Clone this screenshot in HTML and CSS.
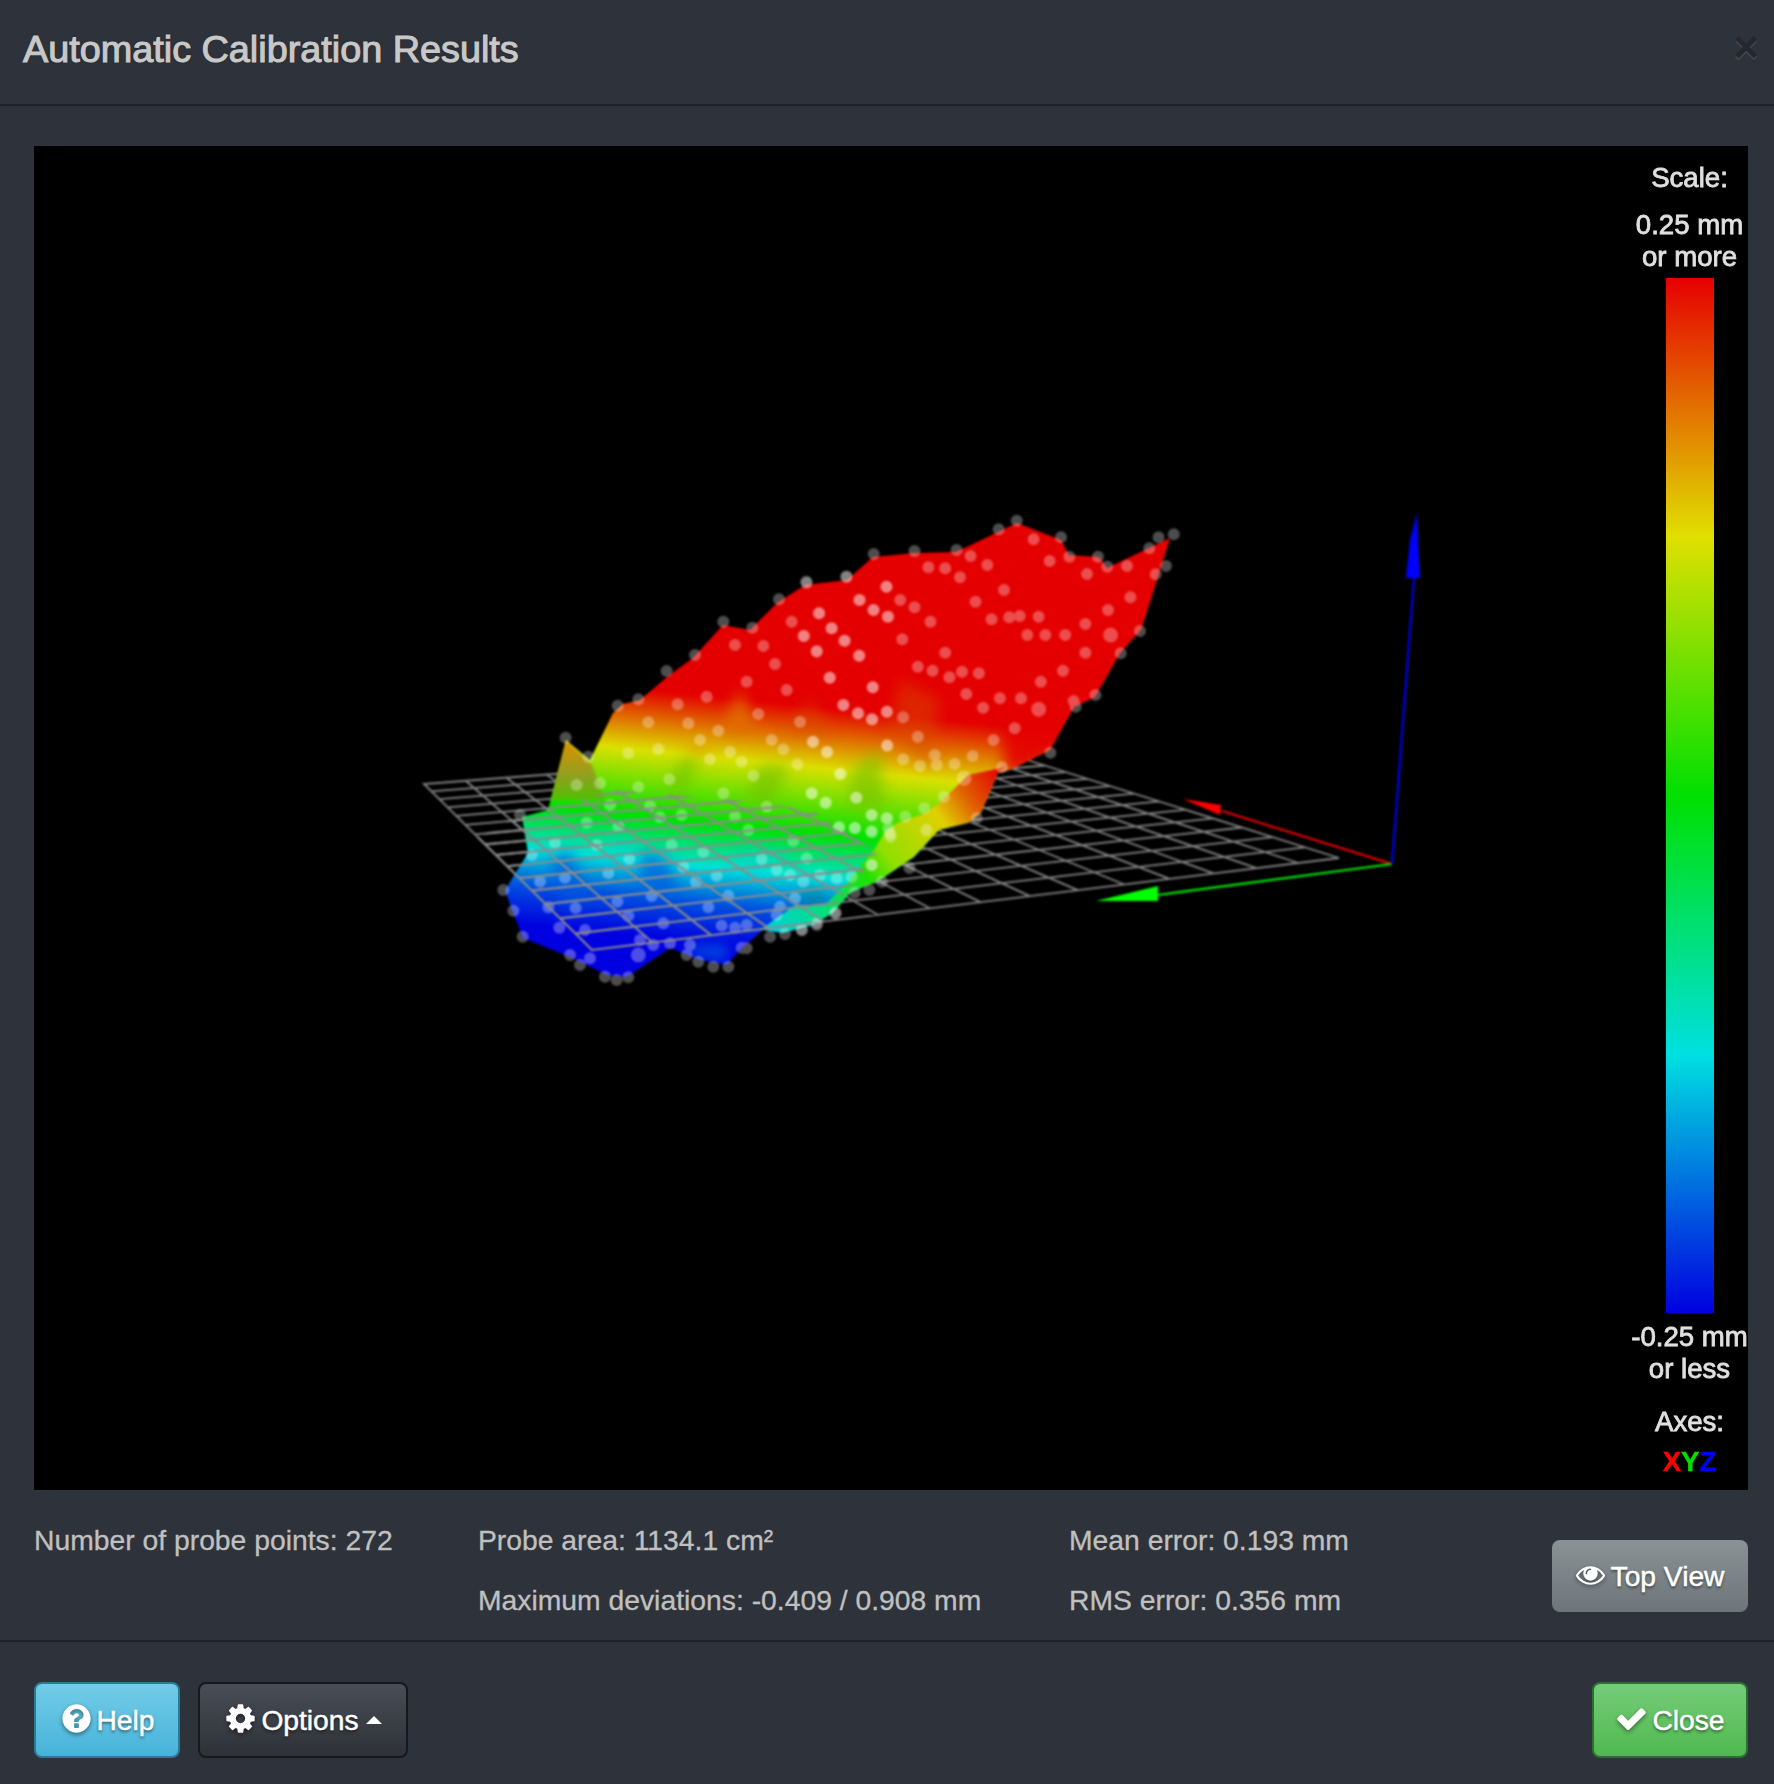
FILE: index.html
```html
<!DOCTYPE html>
<html lang="en">
<head>
<meta charset="utf-8">
<title>Automatic Calibration Results</title>
<link rel="stylesheet" href="styles.css">
</head>
<body>
<header class="head">
  <h3 class="title">Automatic Calibration Results</h3>
  <span class="dismiss">×</span>
</header>
<main class="body">
  <div class="plot">
    <svg class="scene" viewBox="34 146 1714 1344" xmlns="http://www.w3.org/2000/svg">
      <defs>
        <linearGradient id="mainGrad" gradientUnits="userSpaceOnUse" x1="650" y1="690" x2="625" y2="935">
          <stop offset="0" stop-color="#e40000"/>
          <stop offset=".245" stop-color="#dce000"/>
          <stop offset=".51" stop-color="#00e000"/>
          <stop offset=".69" stop-color="#00e0d8"/>
          <stop offset=".84" stop-color="#0050e0"/>
          <stop offset="1" stop-color="#0000e0"/>
        </linearGradient>
        <linearGradient id="foldGrad" gradientUnits="userSpaceOnUse" x1="1000" y1="770" x2="770" y2="935">
          <stop offset="0" stop-color="#e40000"/>
          <stop offset=".15" stop-color="#e06000"/>
          <stop offset=".27" stop-color="#e0d000"/>
          <stop offset=".5" stop-color="#90e000"/>
          <stop offset=".6" stop-color="#20e000"/>
          <stop offset=".8" stop-color="#00e080"/>
          <stop offset="1" stop-color="#00d0e0"/>
        </linearGradient>
        <linearGradient id="spikeGrad" gradientUnits="userSpaceOnUse" x1="566" y1="740" x2="566" y2="800">
          <stop offset="0" stop-color="#e09000"/>
          <stop offset=".6" stop-color="#90a020"/>
          <stop offset="1" stop-color="#50c000"/>
        </linearGradient>
        <filter id="soft" x="-30%" y="-30%" width="160%" height="160%"><feGaussianBlur stdDeviation="7"/></filter>
        <clipPath id="surfaceClip">
          <path d="M566 740L590 760L613 713L623 704L640 700L667 677L693 658L723 625L750 630L777 603L805 585L847 580L873 557L914 553L956 552L1017 523L1061 540L1069 555L1099 557L1107 568L1170 538L1158 577L1141 630L1120 653L1095 697L1074 707L1050 750L1010 770L998 773L981 813L968 823L939 830L914 857L880 880L850 893L833 913L813 925L783 933L763 930L740 950L727 965L700 960L670 948L627 977L607 975L570 957L523 938L512 910L505 890L528 853L522 817L548 810Z"/>
        </clipPath>
        <clipPath id="frontClip">
          <path d="M400 880L520 815L617 790L733 800L813 810L877 853L827 917L700 975L560 975Z"/>
        </clipPath>
        <path id="gridLines" d="M970 742L1339 858L592 950L424 784ZM987.6 747.5L431.5 791.4M1005.9 753.3L439.4 799.2M1025 759.3L447.6 807.3M1044.9 765.5L456.3 815.9M1065.7 772.1L465.4 824.9M1087.5 778.9L475 834.4M1110.2 786.1L485.1 844.4M1134.1 793.6L495.8 855M1159.1 801.4L507.2 866.2M1185.3 809.7L519.2 878.1M1212.9 818.4L531.9 890.6M1242 827.5L545.5 904.1M1272.6 837.1L560 918.4M1304.8 847.3L575.4 933.6M938.2 744.4L1298.3 863M905.9 746.9L1256.5 868.2M872.9 749.5L1213.6 873.4M839.4 752L1169.6 878.9M805.2 754.7L1124.2 884.5M770.3 757.4L1077.7 890.2M734.8 760.1L1029.8 896.1M698.6 762.9L980.6 902.1M661.7 765.7L930 908.4M624 768.6L877.7 914.8M585.6 771.6L824.2 921.4M546.5 774.6L768.7 928.2M506.4 777.7L711.6 935.3M465.7 780.8L652.7 942.5"/>
      </defs>

      <use href="#gridLines" class="grid"/>

      <path class="surface" d="M566 740L590 760L613 713L623 704L640 700L667 677L693 658L723 625L750 630L777 603L805 585L847 580L873 557L914 553L956 552L1017 523L1061 540L1069 555L1099 557L1107 568L1170 538L1158 577L1141 630L1120 653L1095 697L1074 707L1050 750L1010 770L998 773L981 813L968 823L939 830L914 857L880 880L850 893L833 913L813 925L783 933L763 930L740 950L727 965L700 960L670 948L627 977L607 975L570 957L523 938L512 910L505 890L528 853L522 817L548 810Z"/>

      <g clip-path="url(#surfaceClip)">
        <g filter="url(#soft)">
          <path class="w-red" d="M1000 650L1150 560L1100 720L1030 770L1005 775Z"/>
          <path class="w-orange" d="M740 690L756 730L720 733Z"/>
          <path class="w-orange2" d="M810 700L833 733L783 733Z"/>
          <path class="w-orange2" d="M900 680L940 700L930 770L890 730Z"/>
          <path class="w-amber" d="M683 750L700 735L717 757Z"/>
          <path class="w-lime" d="M680 760L700 755L685 795L665 790Z"/>
          <path class="w-lime" d="M760 765L790 765L770 810L745 800Z"/>
          <path class="w-lime" d="M850 770L880 750L885 810L850 810Z"/>
          <path class="w-blue" d="M550 860L570 850L590 900L565 905Z"/>
          <path class="w-blue" d="M640 850L670 860L680 900L640 890Z"/>
          <path class="w-cyan" d="M600 835L640 840L625 860Z"/>
          <path class="w-cyan" d="M730 850L790 850L760 880Z"/>
          <path class="w-teal" d="M800 892L830 893L812 910Z"/>
          <path class="w-lightblue" d="M690 945L730 945L725 960L690 955Z"/>
        </g>
        <path class="spike" d="M566 740L592 765L605 800L545 800Z"/>
        <path class="fold" d="M1006 767L968 775L943 800L926 813L897 823L884 833L876 847L850 880L825 905L795 905L760 930L783 933L813 925L833 913L850 893L880 880L914 857L939 830L968 823L981 813L998 773Z"/>
      </g>

      <path class="probe" d="M1016.8 520.7h0M998.7 529.3h0M1061 537.3h0M1173.8 534.3h0M1158.6 537.3h0M1098 556.7h0M1107.3 566.7h0M1166 566h0M873.7 554h0M914.5 551h0M956.6 550h0M846.3 576.7h0M806.3 581.7h0M1140 631h0M1120.7 653.3h0M1095.5 695h0M1075.7 706.7h0M1050.4 752.7h0M1033.6 539.3h0M1149.3 548.3h0M1069.4 556.7h0M1049.6 561h0M1127 566h0M1087 574h0M1155.7 574.3h0M970.5 556h0M987.3 565h0M928.4 567.3h0M945.2 568.3h0M960 577.3h0M886.3 586.7h0M1004 590h0M1130.4 597.3h0M859 600h0M900.2 600h0M975.5 601.7h0M1108 610h0M914.5 607.3h0M873.7 610h0M819 613.3h0M887.5 616.7h0M991.5 619.3h0M1009.2 617.3h0M1019.7 616h0M1038.6 616.7h0M930.5 621.7h0M1085.4 624h0M831.6 628.3h0M1027.3 635h0M1045.4 635h0M1065.2 635h0M804.2 636h0M844.2 640.7h0M902.3 639.3h0M816.8 651h0M945.2 652.7h0M1085.4 652.7h0M859 655.7h0M917.8 666.7h0M932.6 670.7h0M949.4 677.3h0M962 671.7h0M978.9 673.3h0M1063 670.7h0M829.5 677.7h0M1040.8 681.7h0M872.8 687.3h0M966.3 694h0M999.9 698.3h0M1021 698.3h0M1073.6 701h0M983.1 707.7h0M843.4 705h0M887.1 711.7h0M857.7 713.3h0M872.4 719.3h0M903.1 717.3h0M1014.7 728.3h0M917.8 736.7h0M993.6 740h0M812.6 741.7h0M887.1 745h0M827.4 751.7h0M934.7 755h0M903.1 759.3h0M920 766h0M936.8 765h0M954.5 764h0M972.6 756h0M1002 767.3h0M840.8 774h0M811.8 793.3h0M825.3 802.7h0M856 797.7h0M944 796.7h0M924.2 808.3h0M871.6 815h0M886.3 818.3h0M905.2 816.7h0M838.7 828.3h0M854.7 827.7h0M871.6 831h0M888.4 828.3h0M926.3 830h0M890.5 836.7h0M871.6 865h0M882 881.7h0M869.4 890h0M854.7 892.7h0M835.8 913h0M816.8 925h0M802 930h0M909.4 868h0M976.8 818h0"/>
      <path class="probe probe-big" d="M1110.6 635h0M1038.7 709.3h0M964.2 778.3h0M638.3 955h0"/>
      <g transform="translate(400 500) scale(.33333)">
        <path class="probe3" d="M1220 248h0M1340 230h0M1137 298h0M970 365h0M1057 383h0M885 465h0M800 513h0M653 617h0M715 598h0M497 713h0M565 770h0M360 945h0M310 1170h0M340 1232h0M368 1310h0M510 1365h0M540 1395h0M650 1440h0M615 1430h0M685 1432h0M860 1365h0M895 1385h0M940 1400h0M985 1400h0M1040 1345h0M1110 1310h0M1155 1302h0M1205 1290h0M1250 1270h0M1305 1240h0M1460 260h0M1380 300h0M1420 330h0M1465 350h0M1257 340h0M1175 365h0M1295 385h0M1210 408h0M1335 422h0M1005 435h0M1090 438h0M1250 455h0M1378 467h0M1125 492h0M1290 533h0M1040 545h0M1160 570h0M1418 562h0M920 590h0M833 613h0M1330 615h0M1375 640h0M1460 635h0M1415 658h0M1075 642h0M1200 665h0M745 667h0M865 670h0M955 692h0M900 720h0M1115 720h0M1240 725h0M1150 748h0M1462 738h0M685 760h0M775 747h0M990 755h0M1280 757h0M930 778h0M1025 785h0M1192 793h0M1320 822h0M1060 827h0M530 855h0M600 850h0M715 862h0M808 838h0M970 880h0M1235 880h0M1278 908h0M1370 893h0M1100 920h0M1415 945h0M630 915h0M750 918h0M1462 955h0M560 968h0M780 952h0M845 945h0M1005 950h0M655 980h0M1318 980h0M1365 985h0M1415 997h0M1470 1000h0M1045 990h0M465 1028h0M590 1035h0M815 1035h0M1180 1022h0M910 1055h0M1085 1077h0M1220 1075h0M395 1065h0M688 1077h0M850 1100h0M1130 1110h0M1170 1125h0M1415 1095h0M1260 1125h0M1310 1135h0M1355 1130h0M1210 1145h0M420 1145h0M495 1133h0M625 1120h0M950 1128h0M888 1147h0M755 1188h0M985 1187h0M652 1205h0M1185 1195h0M445 1222h0M527 1225h0M925 1222h0M1140 1220h0M685 1247h0M1130 1245h0M790 1270h0M478 1283h0M555 1290h0M965 1277h0M1005 1283h0M1040 1275h0M720 1320h0M1025 1343h0M760 1335h0M810 1330h0M870 1335h0M570 1375h0"/>
      </g>

      <use href="#gridLines" class="grid grid-front" clip-path="url(#frontClip)"/>

      <path class="axis-x" d="M1392 864L1222 811"/>
      <path class="axis-y" d="M1392 864L1158 895"/>
      <path class="axis-z" d="M1392 864L1414 578"/>
      <path class="cone-x" d="M1183 799L1221 805L1220 815Z"/>
      <path class="cone-y" d="M1096 901L1158 886L1158 901Z"/>
      <path class="cone-z" d="M1417 513L1418 540L1420 578L1406 578L1410 540Z"/>
    </svg>
    <aside class="legend">
      <div class="legend-title">Scale:</div>
      <div class="legend-top">0.25 mm<br>or more</div>
      <div class="legend-bar"></div>
      <div class="legend-bottom">-0.25 mm<br>or less</div>
      <div class="legend-axes">Axes:</div>
      <div class="legend-xyz"><span class="x">X</span><span class="y">Y</span><span class="z">Z</span></div>
    </aside>
  </div>
  <section class="stats">
    <div class="stat">Number of probe points: 272</div>
    <div class="stat">Probe area: 1134.1 cm²</div>
    <div class="stat">Mean error: 0.193 mm</div>
    <button class="btn btn-view">
      <svg class="icon icon-eye" viewBox="0 0 1792 1792"><path d="M1664 960q-152-236-381-353 61 104 61 225 0 185-131.5 316.5t-316.5 131.5-316.5-131.5-131.5-316.5q0-121 61-225-229 117-381 353 133 205 333.5 326.5t434.5 121.5 434.5-121.5 333.5-326.5zm-720-384q0-20-14-34t-34-14q-125 0-214.5 89.5t-89.5 214.5q0 20 14 34t34 14 34-14 14-34q0-86 61-147t147-61q20 0 34-14t14-34zm848 384q0 34-20 69-140 230-376.5 368.5t-499.5 138.5-499.5-139-376.5-368q-20-35-20-69t20-69q140-229 376.5-368t499.5-139 499.5 139 376.5 368q20 35 20 69z"/></svg>
      <span>Top View</span>
    </button>
    <div class="stat stat-second">Maximum deviations: -0.409 / 0.908 mm</div>
    <div class="stat">RMS error: 0.356 mm</div>
  </section>
</main>
<footer class="foot">
  <button class="btn btn-help">
    <svg class="icon" viewBox="0 0 1792 1792"><path d="M1024 1376v-192q0-14-9-23t-23-9h-192q-14 0-23 9t-9 23v192q0 14 9 23t23 9h192q14 0 23-9t9-23zm256-672q0-88-55.5-163t-138.5-116-170-41q-243 0-371 213-15 24 8 42l132 100q7 6 19 6 16 0 25-12 53-68 86-92 34-24 86-24 48 0 85.5 26t37.5 59q0 38-20 61t-68 45q-63 28-115.5 86.5t-52.5 125.5v36q0 14 9 23t23 9h192q14 0 23-9t9-23q0-19 21.5-49.5t54.5-49.5q32-18 49-28.5t46-35 44.5-48 28-60.5 12.5-81zm384 192q0 209-103 385.5t-279.5 279.5-385.5 103-385.5-103-279.5-279.5-103-385.5 103-385.5 279.5-279.5 385.5-103 385.5 103 279.5 279.5 103 385.5z"/></svg>
    <span>Help</span>
  </button>
  <button class="btn btn-options">
    <svg class="icon" viewBox="0 0 1792 1792"><path d="M1152 896q0-106-75-181t-181-75-181 75-75 181 75 181 181 75 181-75 75-181zm512-109v222q0 12-8 23t-20 13l-185 28q-19 54-39 91 35 50 107 138 10 12 10 25t-9 23q-27 37-99 108t-94 71q-12 0-26-9l-138-108q-44 23-91 38-16 136-29 186-7 28-36 28h-222q-14 0-24.5-8.5t-11.5-21.5l-28-184q-49-16-90-37l-141 107q-10 9-25 9-14 0-25-11-126-114-165-168-7-10-7-23 0-12 8-23 15-21 51-66.5t54-70.5q-27-50-41-99l-183-27q-13-2-21-12.5t-8-23.5v-222q0-12 8-23t19-13l186-28q14-46 39-92-40-57-107-138-10-12-10-24 0-10 9-23 26-36 98.5-107.5t94.5-71.5q13 0 26 10l138 107q44-23 91-38 16-136 29-186 7-28 36-28h222q14 0 24.5 8.5t11.5 21.5l28 184q49 16 90 37l142-107q9-9 24-9 13 0 25 10 129 119 165 170 7 8 7 22 0 12-8 23-15 21-51 66.5t-54 70.5q26 50 41 98l183 28q13 2 21 12.5t8 23.5z"/></svg>
    <span>Options</span>
    <i class="caret"></i>
  </button>
  <button class="btn btn-close">
    <svg class="icon" viewBox="0 0 1792 1792"><path d="M1671 566q0 40-28 68l-724 724-136 136q-28 28-68 28t-68-28l-136-136-362-362q-28-28-28-68t28-68l136-136q28-28 68-28t68 28l294 295 656-657q28-28 68-28t68 28l136 136q28 28 28 68z"/></svg>
    <span>Close</span>
  </button>
</footer>
</body>
</html>
```
FILE: styles.css
```css
* { box-sizing: border-box; }
html, body { margin: 0; padding: 0; }
body {
  width: 1774px;
  height: 1784px;
  background: #2e323a;
  color: #c0c0c0;
  font-family: "Liberation Sans", Arial, sans-serif;
  font-size: 28.3px;
  overflow: hidden;
  -webkit-text-stroke: .3px currentColor;
}
.head {
  height: 106px;
  border-bottom: 2px solid #1f2227;
  display: flex;
  align-items: center;
  justify-content: space-between;
  padding: 0 15px 10px 23px;
}
.title {
  margin: 0 0 -4px;
  font-size: 37.8px;
  font-weight: 400;
  color: #c8c8c8;
  -webkit-text-stroke: 1.1px #c8c8c8;
  text-shadow: 0 0 2px #15171a;
}
.dismiss {
  font-size: 44px;
  line-height: 1;
  font-weight: 700;
  color: #24272d;
  -webkit-text-stroke: 0;
  text-shadow: 0 2px 0 #43474e;
}
.body {
  height: 1536px;
  padding: 40px 26px 0 34px;
  border-bottom: 2px solid #1f2227;
}
.plot {
  position: relative;
  width: 1714px;
  height: 1344px;
  background: #000;
  overflow: hidden;
}
.scene {
  position: absolute;
  inset: 0;
  width: 100%;
  height: 100%;
  filter: blur(.8px);
}
.grid { fill: none; stroke: #858585; stroke-width: 1.8; }
.grid-front { stroke: #8c8c8c; stroke-width: 2.1; }
.surface { fill: url(#mainGrad); }
.fold { fill: url(#foldGrad); }
.spike { fill: url(#spikeGrad); filter: blur(1px); }
.w-red { fill: #e40000; opacity: .9; }
.w-orange { fill: #e07000; opacity: .85; }
.w-orange2 { fill: #d85000; opacity: .45; }
.w-amber { fill: #e0a000; opacity: .7; }
.w-lime { fill: #70c000; opacity: .6; }
.w-blue { fill: #0058e0; opacity: .7; }
.w-cyan { fill: #00d0e0; opacity: .5; }
.w-teal { fill: #007f90; opacity: .9; }
.w-lightblue { fill: #0068e0; opacity: .8; }
.probe, .probe3 {
  fill: none;
  stroke: rgba(255, 255, 255, .3);
  stroke-linecap: round;
}
.probe { stroke-width: 12; }
.probe-big { stroke-width: 15; }
.probe3 { stroke-width: 36; }
.axis-x, .axis-y, .axis-z { fill: none; stroke-width: 2.2; }
.axis-x { stroke: #f00000; }
.axis-y { stroke: #00f000; }
.axis-z { stroke: #0000f0; }
.cone-x { fill: #ff0000; }
.cone-y { fill: #00ff00; }
.cone-z { fill: #0000ff; }
.legend {
  position: absolute;
  top: 16px;
  right: 0;
  width: 117px;
  display: flex;
  flex-direction: column;
  align-items: center;
  color: #e0e0e0;
  font-size: 27.6px;
  line-height: 32px;
  text-align: center;
  white-space: nowrap;
  filter: blur(.6px);
  -webkit-text-stroke: .8px currentColor;
}
.legend-top { margin-top: 15px; }
.legend-bar {
  width: 48px;
  height: 1035px;
  margin-top: 5px;
  background: linear-gradient(#e60000, #e0e000 25%, #00e000 50%, #00e0e0 75%, #0000e0);
}
.legend-bottom { margin-top: 8px; }
.legend-axes { margin-top: 21px; }
.legend-xyz { margin-top: 8px; font-weight: 700; -webkit-text-stroke: .4px currentColor; }
.x { color: #ff0000; }
.y { color: #00e000; }
.z { color: #0000ff; }
.stats {
  display: grid;
  grid-template-columns: 444px 591px 1fr auto;
  grid-template-rows: 60px 60px;
  padding-top: 20px;
  line-height: 60px;
}
.stat-second { grid-column: 2; }
.btn {
  display: inline-flex;
  align-items: center;
  justify-content: center;
  gap: 4px;
  padding: 0;
  font: inherit;
  font-size: 28.2px;
  line-height: 1;
  color: #fff;
  -webkit-text-stroke: .5px #fff;
  border: 2px solid transparent;
  border-radius: 8px;
  text-shadow: 0 2px 3px rgba(0, 0, 0, .55);
}
.icon {
  width: 33px;
  height: 33px;
  fill: #fff;
  flex: none;
  margin-top: -3px;
  filter: drop-shadow(0 2px 2px rgba(0, 0, 0, .45));
}
.icon-eye { width: 29px; height: 29px; margin-right: 2px; }
.btn-view {
  grid-column: 4;
  grid-row: 1 / 3;
  align-self: end;
  width: 196px;
  height: 72px;
  margin-bottom: 18px;
  border: 0;
  background: linear-gradient(#8a9295, #6d757a);
}
.foot {
  display: flex;
  align-items: flex-start;
  gap: 18px;
  padding: 40px 26px 0 34px;
}
.foot .btn { height: 76px; }
.btn-help {
  width: 146px;
  border-color: #2a7c96;
  background: linear-gradient(#72cce6, #47b3da);
}
.btn-options {
  width: 210px;
  border-color: #16181b;
  background: linear-gradient(#484e57, #2e3137);
}
.caret {
  width: 0;
  height: 0;
  margin-left: 3px;
  border-left: 8px solid transparent;
  border-right: 8px solid transparent;
  border-bottom: 8px solid #fff;
}
.btn-close {
  width: 156px;
  margin-left: auto;
  border-color: #2f6e33;
  background: linear-gradient(#75cc79, #50b950);
}
```
